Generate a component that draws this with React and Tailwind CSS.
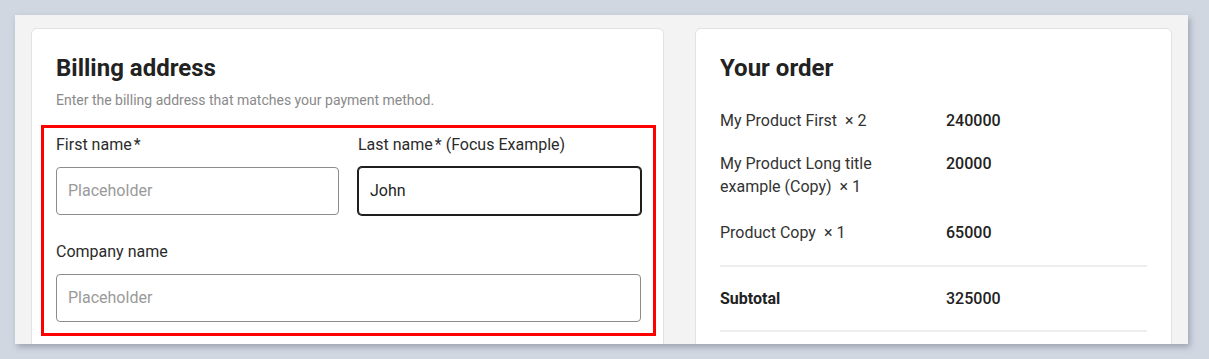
import React from "react";

const items = [
  { name: "My Product First", qty: 2, price: "240000" },
  { name: "My Product Long title example (Copy)", qty: 1, price: "20000", wrap: true },
  { name: "Product Copy", qty: 1, price: "65000" },
];

function Field({ label, required, hint, value, focused, className = "" }) {
  return (
    <div className={className}>
      <label className="block text-base leading-[22px] text-[#2b2b2b]">
        {label}
        {required && <span className="ml-0.5">*</span>}
        {hint && <span> {hint}</span>}
      </label>
      <div
        className={`mt-[11px] h-12 rounded-[4px] bg-white flex items-center pl-[11px] text-base ${
          focused
            ? "border border-[#1e1e1e] ring-1 ring-[#1e1e1e] text-[#1e1e1e]"
            : "border border-[#8c8c8c] text-[#9a9a9a]"
        }`}
      >
        {value || "Placeholder"}
      </div>
    </div>
  );
}

export default function App() {
  return (
    <div
      className="h-[359px] bg-[#d1d7e1] pt-[15px] pl-[15px] pr-[21px]"
      style={{ fontFamily: "Roboto, 'Noto Sans', sans-serif" }}
    >
      <div className="h-[329px] overflow-hidden bg-[#f3f3f3] shadow-[2px_3px_6px_rgba(60,70,90,0.35)] px-4 pt-[13px]">
        <div className="grid grid-cols-[633px_1fr] gap-[31px]">
          {/* Billing address */}
          <div className="rounded-md border border-[#e2e2e2] bg-white px-6 pt-[23px] h-[400px]">
            <h2 className="text-2xl leading-8 font-bold text-[#222]">
              Billing address
            </h2>
            <p className="mt-1.5 text-sm leading-5 text-[#8a8a8a]">
              Enter the billing address that matches your payment method.
            </p>
            <div className="mt-[15px] ml-[-15px] mr-[-17px] border-[3px] border-[#ff0000] px-3 pt-[6px] pb-[11px]">
              <div className="grid grid-cols-2 gap-[19px]">
                <Field label="First name" required />
                <Field label="Last name" required hint="(Focus Example)" value="John" focused />
              </div>
              <Field label="Company name" className="mt-[26px]" />
            </div>
          </div>

          {/* Your order */}
          <div className="rounded-md border border-[#e2e2e2] bg-white px-6 pt-[23px] h-[400px]">
            <h2 className="text-2xl leading-8 font-bold text-[#222]">
              Your order
            </h2>
            <div className="mt-[15px]">
              {items.map((item) => (
                <div
                  key={item.name}
                  className={`grid grid-cols-[226px_1fr] pt-[10px] text-base leading-[23px] ${
                    item.wrap ? "pb-[13px]" : "pb-[10px]"
                  }`}
                >
                  <div className="text-[#333] pr-12">
                    {item.name}
                    <span className="ml-2">× {item.qty}</span>
                  </div>
                  <div className="font-medium text-[#222]">{item.price}</div>
                </div>
              ))}
            </div>
            <div className="mt-[11px] border-t-2 border-[#eeeeee]" />
            <div className="grid grid-cols-[226px_1fr] py-[20px] text-base leading-[23px]">
              <div className="font-bold text-[#222]">Subtotal</div>
              <div className="font-medium text-[#222]">325000</div>
            </div>
            <div className="border-t-2 border-[#eeeeee]" />
          </div>
        </div>
      </div>
    </div>
  );
}
